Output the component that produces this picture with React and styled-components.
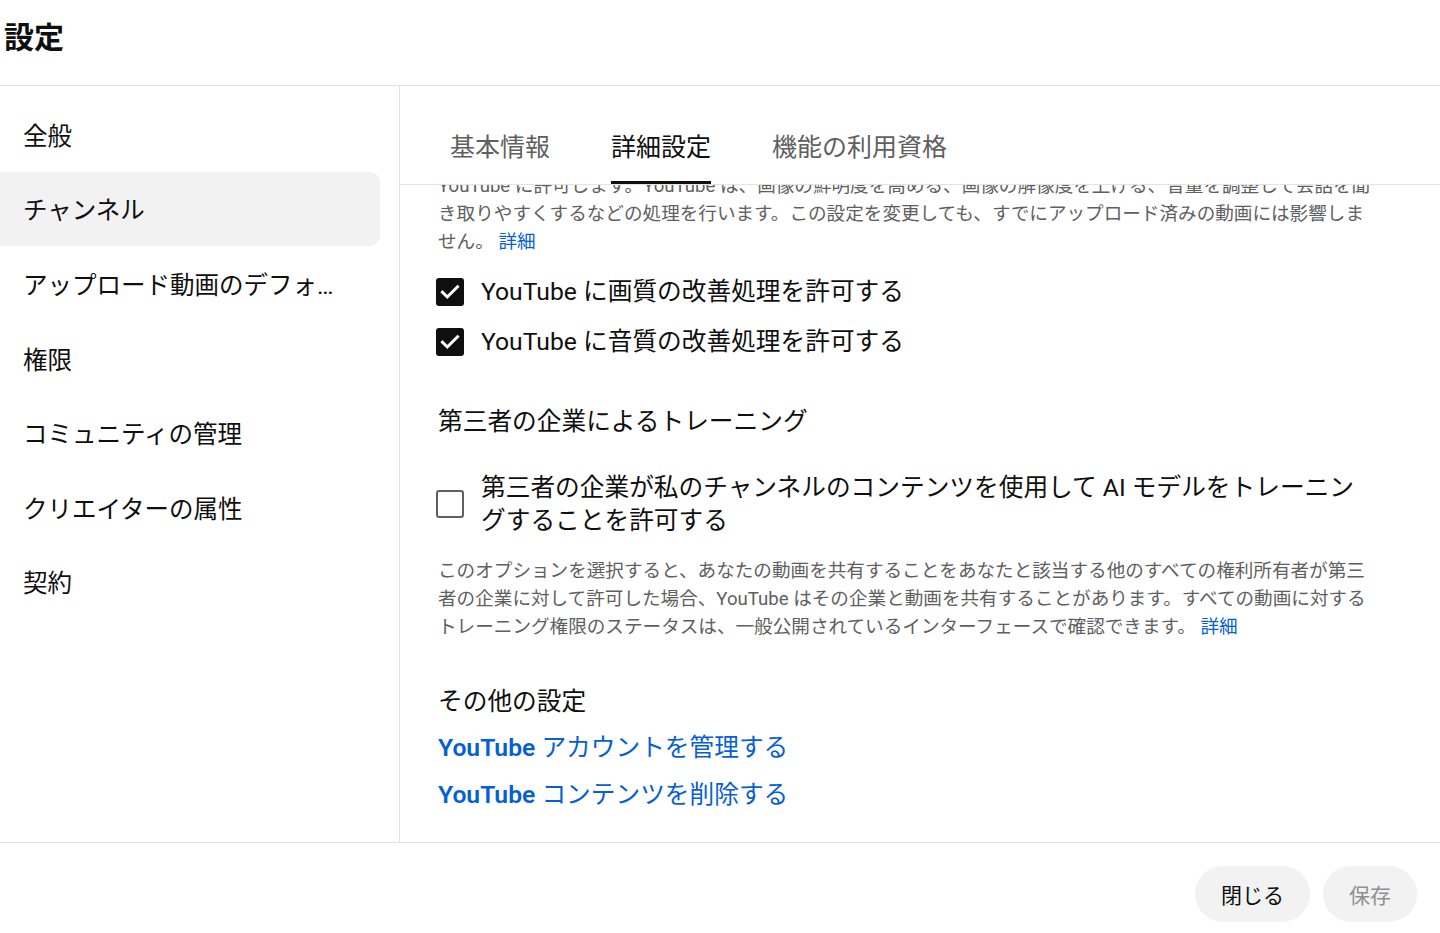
import React, { useLayoutEffect, useRef } from 'react'
import styled, { createGlobalStyle } from 'styled-components'

const GlobalStyle = createGlobalStyle`
  html, body {
    margin: 0;
    padding: 0;
    background: #fff;
  }
  body {
    font-family: Roboto, "Noto Sans CJK JP", "Noto Sans", sans-serif;
    color: #0f0f0f;
  }
  * { box-sizing: border-box; }
`

const sideItems = [
  '全般',
  'チャンネル',
  'アップロード動画のデフォルト設定',
  '権限',
  'コミュニティの管理',
  'クリエイターの属性',
  '契約',
]

const tabs = ['基本情報', '詳細設定', '機能の利用資格']

function CheckIcon() {
  return (
    <svg width="28" height="28" viewBox="0 0 28 28">
      <path d="M6.5 14.2l4.8 4.8 10.2-10.2" fill="none" stroke="#fff" strokeWidth="3" strokeLinecap="square" />
    </svg>
  )
}

function App() {
  const scrollRef = useRef(null)
  const leadRef = useRef(null)

  useLayoutEffect(() => {
    // the dialog is shown scrolled so the first paragraph line is cut by the tab bar
    if (scrollRef.current && leadRef.current) {
      scrollRef.current.scrollTop = leadRef.current.offsetTop + 13
    }
  }, [])

  return (
    <Page>
      <GlobalStyle />
      <Header>
        <Title>設定</Title>
      </Header>
      <Body>
        <Sidebar>
          {sideItems.map((item, i) => (
            <NavItem key={item} active={i === 1}>
              <span>{item}</span>
            </NavItem>
          ))}
        </Sidebar>
        <Main>
          <TabBar>
            {tabs.map((t, i) => (
              <Tab key={t} active={i === 1}>{t}</Tab>
            ))}
          </TabBar>
          <Scroller ref={scrollRef}>
            <Heading>画質と音質の改善</Heading>
            <Help ref={leadRef}>
              YouTube に許可します。YouTube は、画像の鮮明度を高める、画像の解像度を上げる、音量を調整して会話を聞き取りやすくするなどの処理を行います。この設定を変更しても、すでにアップロード済みの動画には影響しません。 <Link>詳細</Link>
            </Help>
            <CheckRow top={11}>
              <Box checked><CheckIcon /></Box>
              <Label>YouTube に画質の改善処理を許可する</Label>
            </CheckRow>
            <CheckRow>
              <Box checked><CheckIcon /></Box>
              <Label>YouTube に音質の改善処理を許可する</Label>
            </CheckRow>
            <Heading top={38}>第三者の企業によるトレーニング</Heading>
            <CheckRow top={24}>
              <Box />
              <Label tight>第三者の企業が私のチャンネルのコンテンツを使用して AI モデルをトレーニングすることを許可する</Label>
            </CheckRow>
            <Help top={12}>
              このオプションを選択すると、あなたの動画を共有することをあなたと該当する他のすべての権利所有者が第三者の企業に対して許可した場合、YouTube はその企業と動画を共有することがあります。すべての動画に対するトレーニング権限のステータスは、一般公開されているインターフェースで確認できます。 <Link>詳細</Link>
            </Help>
            <Heading top={44}>その他の設定</Heading>
            <BigLink top={12}><b>YouTube</b> アカウントを管理する</BigLink>
            <BigLink top={13}><b>YouTube</b> コンテンツを削除する</BigLink>
            <Spacer />
          </Scroller>
        </Main>
      </Body>
      <Footer>
        <Button>閉じる</Button>
        <Button disabled>保存</Button>
      </Footer>
    </Page>
  )
}

const Page = styled.div`
  height: 933px;
  display: flex;
  flex-direction: column;
  overflow: hidden;
`

const Header = styled.header`
  height: 86px;
  flex-shrink: 0;
  display: flex;
  align-items: center;
  padding: 0 0 10px 4px;
  border-bottom: 1px solid #e3e3e3;
`

const Title = styled.h1`
  margin: 0;
  font-size: 30px;
  font-weight: 700;
  line-height: 40px;
  color: #0f0f0f;
`

const Body = styled.div`
  flex: 1;
  min-height: 0;
  display: flex;
`

const Sidebar = styled.nav`
  width: 400px;
  flex-shrink: 0;
  border-right: 1px solid #e3e3e3;
  padding-top: 11px;
`

const NavItem = styled.div`
  width: 380px;
  height: 74.6px;
  display: flex;
  align-items: center;
  padding: 0 30px 0 23px;
  font-size: 24.5px;
  color: #0f0f0f;
  border-radius: 0 10px 10px 0;
  background: ${p => (p.active ? '#f2f2f2' : 'transparent')};

  span {
    display: block;
    white-space: nowrap;
    overflow: hidden;
    text-overflow: ellipsis;
  }
`

const Main = styled.main`
  flex: 1;
  min-width: 0;
  display: flex;
  flex-direction: column;
`

const TabBar = styled.div`
  height: 99px;
  flex-shrink: 0;
  display: flex;
  gap: 61px;
  padding-left: 50px;
  border-bottom: 1px solid #e3e3e3;
`

const Tab = styled.div`
  display: flex;
  align-items: center;
  padding-top: 22px;
  font-size: 25px;
  color: ${p => (p.active ? '#0f0f0f' : '#606060')};
  border-bottom: 3px solid ${p => (p.active ? '#0f0f0f' : 'transparent')};
`

const Scroller = styled.div`
  flex: 1;
  min-height: 0;
  position: relative;
  overflow-y: auto;
  scrollbar-width: none;
  padding: 0 66px 0 38px;
  &::-webkit-scrollbar { display: none; }
`

const Heading = styled.h2`
  margin: ${p => p.top || 0}px 0 0;
  font-size: 24.7px;
  font-weight: 400;
  line-height: 34px;
  color: #0f0f0f;
`

const Help = styled.p`
  margin: ${p => p.top || 0}px 0 0;
  font-size: 18.6px;
  line-height: 28px;
  color: #606060;
`

const Link = styled.a`
  color: #065fd4;
  cursor: pointer;
`

const CheckRow = styled.label`
  display: flex;
  align-items: center;
  gap: 17px;
  margin-top: ${p => p.top || 0}px;
  padding: 8px 0;
  cursor: pointer;
`

const Box = styled.span`
  width: 28px;
  height: 28px;
  flex-shrink: 0;
  margin-left: -2px;
  border-radius: 3px;
  display: flex;
  background: ${p => (p.checked ? '#0f0f0f' : '#fff')};
  border: ${p => (p.checked ? 'none' : '2px solid #606060')};
`

const Label = styled.span`
  font-size: 24.7px;
  line-height: ${p => (p.tight ? '33px' : '34px')};
  color: #0f0f0f;
`

const BigLink = styled.a`
  display: block;
  margin-top: ${p => p.top || 0}px;
  font-size: 24.7px;
  line-height: 34px;
  color: #065fd4;
  cursor: pointer;

  b { font-weight: 600; }
`

const Spacer = styled.div`
  height: 60px;
`

const Footer = styled.footer`
  height: 91px;
  flex-shrink: 0;
  display: flex;
  justify-content: flex-end;
  align-items: flex-start;
  gap: 13px;
  padding: 23px 23px 0 0;
  border-top: 1px solid #e3e3e3;
`

const Button = styled.button`
  height: 56px;
  padding: 0 26px;
  border: none;
  border-radius: 28px;
  background: #f2f2f2;
  font-family: inherit;
  font-size: 21px;
  color: ${p => (p.disabled ? '#909090' : '#0f0f0f')};
  cursor: ${p => (p.disabled ? 'default' : 'pointer')};
`

export default App
